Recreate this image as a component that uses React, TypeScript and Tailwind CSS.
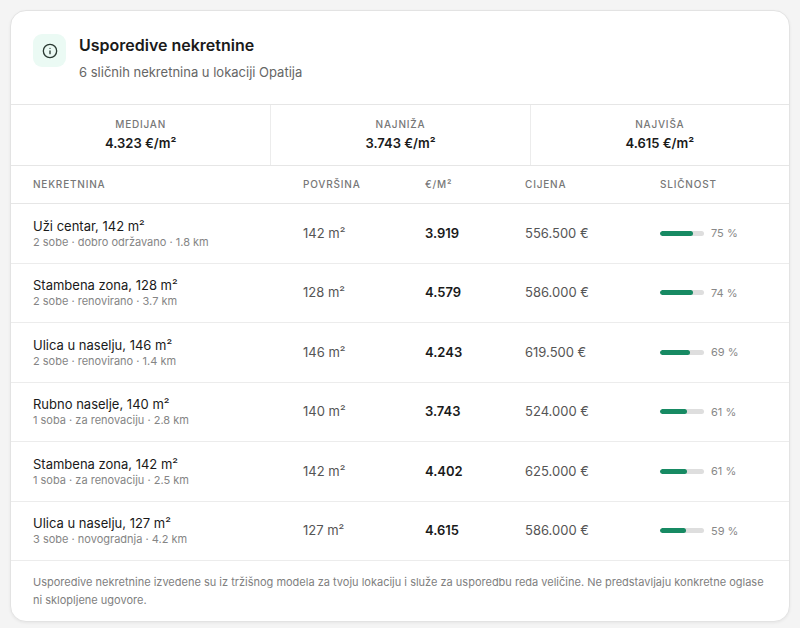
import React from "react";

const stats = [
    { label: "Medijan", value: "4.323 €/m²" },
    { label: "Najniža", value: "3.743 €/m²" },
    { label: "Najviša", value: "4.615 €/m²" },
];

const rows = [
    { title: "Uži centar, 142 m²", meta: "2 sobe · dobro održavano · 1.8 km", area: "142 m²", ppm: "3.919", price: "556.500 €", sim: 75 },
    { title: "Stambena zona, 128 m²", meta: "2 sobe · renovirano · 3.7 km", area: "128 m²", ppm: "4.579", price: "586.000 €", sim: 74 },
    { title: "Ulica u naselju, 146 m²", meta: "2 sobe · renovirano · 1.4 km", area: "146 m²", ppm: "4.243", price: "619.500 €", sim: 69 },
    { title: "Rubno naselje, 140 m²", meta: "1 soba · za renovaciju · 2.8 km", area: "140 m²", ppm: "3.743", price: "524.000 €", sim: 61 },
    { title: "Stambena zona, 142 m²", meta: "1 soba · za renovaciju · 2.5 km", area: "142 m²", ppm: "4.402", price: "625.000 €", sim: 61 },
    { title: "Ulica u naselju, 127 m²", meta: "3 sobe · novogradnja · 4.2 km", area: "127 m²", ppm: "4.615", price: "586.000 €", sim: 59 },
];

const cols = "grid grid-cols-[270px_122px_100px_135px_1fr] items-center px-[22px]";

export default function App() {
    return (
        <div className="min-h-screen bg-[#f4f4f4] p-[10px] font-['Inter',sans-serif]">
            <div className="overflow-hidden rounded-2xl border border-[#e3e3e3] bg-white shadow-[0_1px_3px_rgba(0,0,0,0.06)]">
                {/* header */}
                <div className="flex items-start gap-[13px] px-[22px] pt-[23px] pb-[23px] border-b border-[#e6e6e6]">
                    <div className="flex h-[33px] w-[33px] items-center justify-center rounded-[9px] bg-[#ebfaf4]">
                        <svg width="16" height="16" viewBox="0 0 24 24" fill="none" stroke="#2b3a33" strokeWidth="2" strokeLinecap="round" strokeLinejoin="round">
                            <circle cx="12" cy="12" r="10" />
                            <path d="M12 16v-4" />
                            <path d="M12 8h.01" />
                        </svg>
                    </div>
                    <div>
                        <h2 className="text-[16px] font-semibold leading-[22px] text-[#1a1a1a]">Usporedive nekretnine</h2>
                        <p className="mt-[7px] text-[13px] leading-[18px] text-[#666]">6 sličnih nekretnina u lokaciji Opatija</p>
                    </div>
                </div>

                {/* stats */}
                <div className="grid grid-cols-3 border-b border-[#e6e6e6]">
                    {stats.map((s, i) => (
                        <div key={i} className={`flex flex-col items-center pt-[12px] pb-[13px] ${i > 0 ? "border-l border-[#ececec]" : ""}`}>
                            <span className="text-[10px] font-medium uppercase tracking-[0.08em] leading-[14px] text-[#777]">{s.label}</span>
                            <span className="mt-[3px] text-[13px] font-semibold leading-[18px] text-[#1a1a1a]">{s.value}</span>
                        </div>
                    ))}
                </div>

                {/* table header */}
                <div className={`${cols} h-[38px] border-b border-[#e6e6e6] text-[10px] font-medium uppercase tracking-[0.08em] text-[#777]`}>
                    <span>Nekretnina</span>
                    <span>Površina</span>
                    <span>€/m²</span>
                    <span>Cijena</span>
                    <span>Sličnost</span>
                </div>

                {/* rows */}
                {rows.map((r, i) => (
                    <div key={i} className={`${cols} h-[59.5px] border-b border-[#ececec]`}>
                        <div className="flex flex-col">
                            <span className="text-[13px] leading-[18px] text-[#1a1a1a]">{r.title}</span>
                            <span className="text-[11px] leading-[15px] text-[#858585]">{r.meta}</span>
                        </div>
                        <span className="text-[13px] text-[#555]">{r.area}</span>
                        <span className="text-[13px] font-semibold text-[#1a1a1a]">{r.ppm}</span>
                        <span className="text-[13px] text-[#555]">{r.price}</span>
                        <div className="flex items-center gap-[7px]">
                            <div className="h-[5px] w-[44px] overflow-hidden rounded-full bg-[#dedede]">
                                <div className="h-full rounded-full bg-[#178a63]" style={{ width: `${r.sim}%` }} />
                            </div>
                            <span className="text-[11px] text-[#888]">{r.sim} %</span>
                        </div>
                    </div>
                ))}

                {/* footer */}
                <p className="px-[22px] pt-[12px] pb-[12px] text-[11px] leading-[18px] text-[#808080]">
                    Usporedive nekretnine izvedene su iz tržišnog modela za tvoju lokaciju i služe za usporedbu reda veličine. Ne predstavljaju konkretne oglase ni sklopljene ugovore.
                </p>
            </div>
        </div>
    );
}
